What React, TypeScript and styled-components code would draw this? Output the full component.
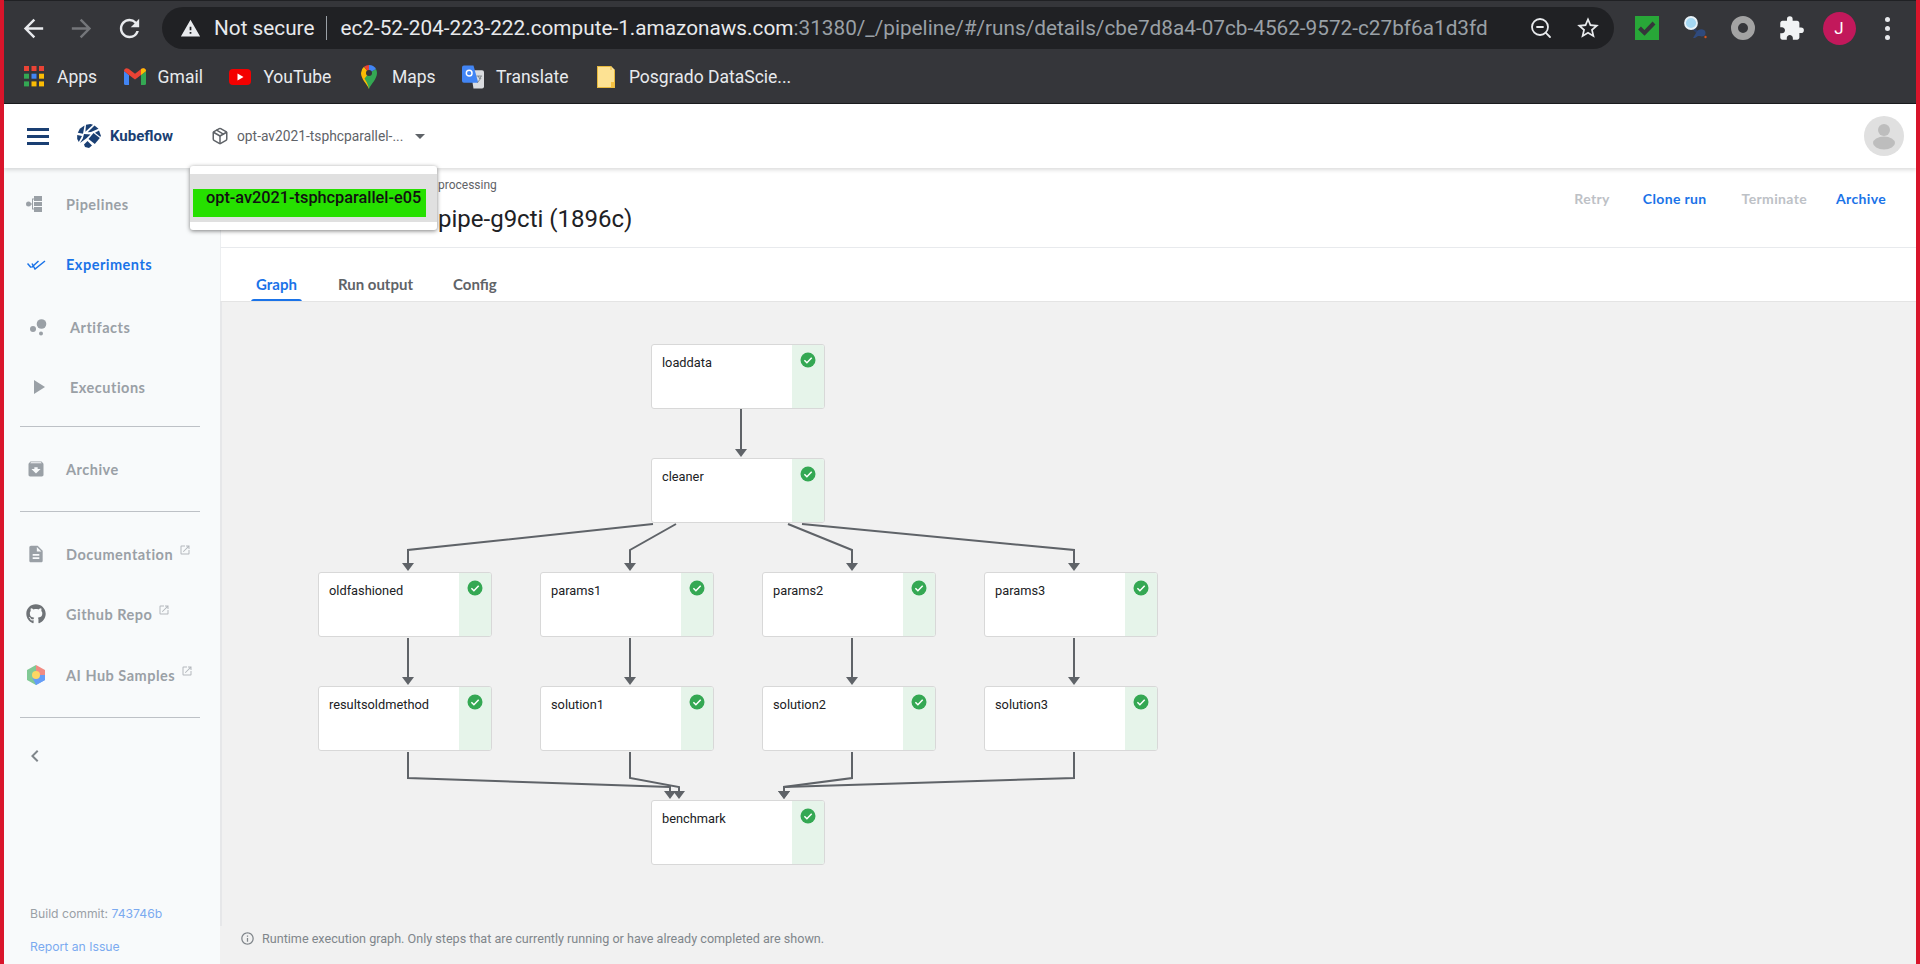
import styled, { createGlobalStyle } from 'styled-components'
import {
  MdArchive,
  MdArrowBack,
  MdArrowForward,
  MdChevronLeft,
  MdDescription,
  MdExtension,
  MdInfoOutline,
  MdOpenInNew,
  MdOutlineStarBorder,
  MdRefresh,
  MdWarning,
} from 'react-icons/md'
import { FaGithub } from 'react-icons/fa'
import { Package, ZoomOut } from 'lucide-react'

const colours = {
  red: '#d9152b',
  chrome: '#35363a',
  omnibox: '#202124',
  blue: '#1a73e8',
  navy: '#1a3f73',
  navGrey: '#9aa0a6',
  line: '#bdc1c6',
  canvas: '#f1f1f1',
  edge: '#5f6368',
  success: '#34a853',
}

const GlobalStyle = createGlobalStyle`
  html, body {
    margin: 0;
    padding: 0;
    height: 100%;
    overflow: hidden;
    background: #fff;
    font-family: Roboto, "Liberation Sans", sans-serif;
  }
`

const Stage = styled.div`
  position: relative;
  height: 964px;
  box-sizing: border-box;
  border-left: 4px solid ${colours.red};
  border-right: 4px solid ${colours.red};
  display: flex;
  flex-direction: column;
  overflow: hidden;
`

const Chrome = styled.div`
  height: 104px;
  flex: none;
  box-sizing: border-box;
  background: ${colours.chrome};
  border-top: 1px solid #202124;
  border-bottom: 1px solid #1b1c1f;
`

const Toolbar = styled.div`
  height: 55px;
  display: flex;
  align-items: flex-start;
  padding: 6px 5px 0;
  box-sizing: border-box;
`

const NavButton = styled.div<{ $dim?: boolean }>`
  width: 48px;
  height: 42px;
  flex: none;
  display: flex;
  align-items: center;
  justify-content: center;
  font-size: 29px;
  color: ${(p) => (p.$dim ? '#74767a' : '#e8eaed')};
`

const Omnibox = styled.div`
  flex: 1;
  height: 42px;
  margin: 0 9px;
  padding: 0 13px 0 18px;
  border-radius: 21px;
  background: ${colours.omnibox};
  display: flex;
  align-items: center;
  color: #e8eaed;
  font-size: 20.75px;
  white-space: nowrap;
`

const OmniIcon = styled.span<{ $size: number; $color?: string; $left?: number }>`
  display: flex;
  flex: none;
  font-size: ${(p) => p.$size}px;
  color: ${(p) => p.$color ?? '#e8eaed'};
  margin-left: ${(p) => p.$left ?? 0}px;
`

const SecurityLabel = styled.span`
  margin-left: 13px;
`

const Divider = styled.span`
  width: 1px;
  height: 24px;
  margin: 0 13px 0 12px;
  background: #9aa0a6;
`

const UrlRest = styled.span`
  color: #9aa0a6;
`

const Url = styled.span`
  flex: 1;
`

const ExtSlot = styled.div`
  width: 48px;
  height: 42px;
  flex: none;
  display: flex;
  align-items: center;
  justify-content: center;
`

const ExtCheck = styled.div`
  width: 24px;
  height: 24px;
  background: #28a738;
  display: flex;
  align-items: center;
  justify-content: center;
`

const ExtRing = styled.div`
  width: 24px;
  height: 24px;
  box-sizing: border-box;
  border: 7px solid #a3a3a3;
  border-radius: 50%;
`

const UserBadge = styled.div`
  width: 33px;
  height: 33px;
  border-radius: 50%;
  background: #c2185b;
  color: #fff;
  font-size: 17px;
  display: flex;
  align-items: center;
  justify-content: center;
`

const Dots = styled.div`
  display: flex;
  flex-direction: column;
  gap: 4px;
`

const Dot = styled.span`
  width: 5px;
  height: 5px;
  border-radius: 50%;
  background: #e8eaed;
`

const BookmarkBar = styled.div`
  height: 47px;
  display: flex;
  align-items: center;
  padding-left: 6px;
  padding-bottom: 6px;
  box-sizing: border-box;
`

const Bookmark = styled.div`
  display: flex;
  align-items: center;
  gap: 12px;
  padding: 0 13.5px 0 13px;
  color: #e8eaed;
  font-size: 17.5px;
  white-space: nowrap;
`

const BookmarkIcon = styled.span`
  width: 22px;
  height: 24px;
  flex: none;
  display: flex;
  align-items: center;
  justify-content: center;
`

const Header = styled.header`
  height: 64px;
  flex: none;
  position: relative;
  z-index: 2;
  background: #fff;
  box-shadow: 0 2px 4px rgba(0, 0, 0, 0.14);
  display: flex;
  align-items: center;
  padding: 0 12px 0 23px;
`

const Burger = styled.div`
  width: 22px;
  display: flex;
  flex-direction: column;
  gap: 4px;
`

const BurgerLine = styled.span`
  height: 3px;
  background: ${colours.navy};
`

const Brand = styled.div`
  display: flex;
  align-items: center;
  gap: 9px;
  margin-left: 28px;
  color: ${colours.navy};
  font-size: 15px;
  font-weight: 700;
  width: 134px;
`

const Namespace = styled.div`
  display: flex;
  align-items: center;
  color: #5f6368;
  font-size: 13.8px;
`

const NamespaceText = styled.span`
  margin-left: 8px;
  width: 178px;
`

const Caret = styled.span`
  width: 0;
  height: 0;
  border-left: 5px solid transparent;
  border-right: 5px solid transparent;
  border-top: 5px solid #5f6368;
`

const Avatar = styled.div`
  margin-left: auto;
  width: 40px;
  height: 40px;
  border-radius: 50%;
  background: #e0e0e0;
`

const Menu = styled.div`
  position: absolute;
  z-index: 3;
  left: 186px;
  top: 166px;
  width: 247px;
  box-sizing: border-box;
  padding: 8px 0;
  background: #fff;
  border-radius: 3px;
  box-shadow: 0 1px 4px rgba(0, 0, 0, 0.5);
`

const MenuOption = styled.div`
  height: 48px;
  box-sizing: border-box;
  padding: 15px 11px 5px 3px;
  background: #e0e0e0;
`

const MenuLabel = styled.div`
  height: 28px;
  box-sizing: border-box;
  padding-left: 13px;
  background: #26e000;
  color: #111;
  font-size: 16.3px;
  font-weight: 500;
  line-height: 18px;
  white-space: nowrap;
`

const Body = styled.div`
  flex: 1;
  display: flex;
  min-height: 0;
`

const Sidebar = styled.nav`
  width: 216px;
  flex: none;
  box-sizing: border-box;
  background: #f8fafb;
  padding: 6px 20px 0 0;
  display: flex;
  flex-direction: column;
  font-family: Lato, Roboto, sans-serif;
`

const NavRow = styled.div<{ $active?: boolean; $pad?: number; $top?: number }>`
  height: 60px;
  flex: none;
  display: flex;
  align-items: center;
  margin-top: ${(p) => p.$top ?? 0}px;
  padding-left: ${(p) => p.$pad ?? 22}px;
  color: ${(p) => (p.$active ? colours.blue : colours.navGrey)};
  font-size: 14.5px;
  font-weight: 700;
  letter-spacing: 0.5px;
  white-space: nowrap;
`

const NavIcon = styled.span`
  width: 20px;
  flex: none;
  display: flex;
  justify-content: center;
  font-size: 20px;
`

const NavLabel = styled.span<{ $indent?: number }>`
  margin-left: ${(p) => p.$indent ?? 20}px;
`

const ExternalMark = styled.span`
  display: flex;
  margin: -8px 0 0 6px;
  font-size: 12px;
  color: #b4b8bd;
`

const SideRule = styled.hr<{ $top: number; $bottom: number }>`
  width: 180px;
  flex: none;
  margin: ${(p) => p.$top}px 0 ${(p) => p.$bottom}px 16px;
  border: 0;
  border-top: 1px solid ${colours.line};
`

const Collapse = styled.div`
  padding-left: 19px;
  font-size: 24px;
  line-height: 0;
  color: #80868b;
  margin-top: 26px;
`

const SideFooter = styled.div`
  margin-top: auto;
  padding: 0 0 10px 26px;
  font-family: Inter, Roboto, sans-serif;
  font-size: 12.2px;
  color: ${colours.navGrey};
  display: flex;
  flex-direction: column;
  gap: 18px;
  white-space: nowrap;
`

const FooterLink = styled.span`
  color: #7baaf0;
`

const Main = styled.main`
  flex: 1;
  min-width: 0;
  display: flex;
  flex-direction: column;
`

const TitleBar = styled.div`
  height: 80px;
  flex: none;
  box-sizing: border-box;
  border-left: 1px solid #eceef0;
  border-bottom: 1px solid #e8eaed;
  padding: 0 30px 0 61px;
  display: flex;
  justify-content: space-between;
`

const Crumbs = styled.div`
  padding-top: 10px;
`

const Crumb = styled.div`
  margin-left: 156px;
  font-size: 12px;
  line-height: 14px;
  color: #5f6368;
`

const TitleRow = styled.div`
  display: flex;
  align-items: center;
  margin-top: 13px;
  height: 28px;
`

const StatusDot = styled.span`
  width: 16px;
  height: 16px;
  margin-top: -2px;
  border-radius: 50%;
  background: ${colours.success};
`

const Title = styled.h1`
  margin: 0 0 0 140px;
  font-size: 24px;
  font-weight: 400;
  color: #202124;
  white-space: nowrap;
`

const Actions = styled.div`
  display: flex;
  padding-top: 23px;
  font-family: Lato, Roboto, sans-serif;
  font-size: 14px;
  font-weight: 700;
  letter-spacing: 0.35px;
  line-height: 16px;
`

const Action = styled.span<{ $on?: boolean; $left: number }>`
  margin-left: ${(p) => p.$left}px;
  color: ${(p) => (p.$on ? colours.blue : '#bdc1c6')};
`

const Tabs = styled.div`
  height: 54px;
  flex: none;
  box-sizing: border-box;
  border-left: 1px solid #eceef0;
  padding-left: 30px;
  display: flex;
`

const Tab = styled.div<{ $on?: boolean; $left: number }>`
  margin-left: ${(p) => p.$left}px;
  position: relative;
  padding: 0 5px;
  line-height: 72px;
  height: 54px;
  font-family: Lato, Roboto, sans-serif;
  font-size: 15px;
  font-weight: 700;
  color: ${(p) => (p.$on ? colours.blue : '#5f6368')};
  ${(p) =>
    p.$on &&
    `&::after {
      content: '';
      position: absolute;
      left: 0;
      right: 0;
      bottom: 0;
      height: 3px;
      border-radius: 3px 3px 0 0;
      background: ${colours.blue};
    }`}
`

const GraphArea = styled.div`
  flex: 1;
  min-height: 0;
  display: flex;
  flex-direction: column;
  background: ${colours.canvas};
`

const Canvas = styled.div`
  position: relative;
  flex: 1;
  border-top: 1px solid #e4e4e4;
  border-left: 2px solid #e6e7e9;
  margin-top: -1px;
`

const Edges = styled.svg`
  position: absolute;
  left: 0;
  top: 0;
`

const Node = styled.div<{ $x: number; $y: number }>`
  position: absolute;
  left: ${(p) => p.$x - 222}px;
  top: ${(p) => p.$y - 302}px;
  width: 174px;
  height: 65px;
  box-sizing: border-box;
  display: flex;
  background: #fff;
  border: 1px solid #d8d8d8;
  border-radius: 3px;
  overflow: hidden;
`

const NodeName = styled.div`
  flex: 1;
  padding: 10px 10px;
  font-size: 12.8px;
  line-height: 15px;
  color: #202124;
`

const NodeStatus = styled.div`
  width: 32px;
  flex: none;
  background: #e6f4ea;
  padding: 7px 0 0 8px;
  box-sizing: border-box;
`

const Note = styled.div`
  height: 38px;
  flex: none;
  box-sizing: border-box;
  padding: 0 0 14px 20px;
  display: flex;
  align-items: center;
  gap: 7px;
  font-size: 12.6px;
  color: #80868b;
  white-space: nowrap;
`

const NoteIcon = styled.span`
  display: flex;
  font-size: 15px;
`

const nodes = [
  { name: 'loaddata', x: 651, y: 344 },
  { name: 'cleaner', x: 651, y: 458 },
  { name: 'oldfashioned', x: 318, y: 572 },
  { name: 'params1', x: 540, y: 572 },
  { name: 'params2', x: 762, y: 572 },
  { name: 'params3', x: 984, y: 572 },
  { name: 'resultsoldmethod', x: 318, y: 686 },
  { name: 'solution1', x: 540, y: 686 },
  { name: 'solution2', x: 762, y: 686 },
  { name: 'solution3', x: 984, y: 686 },
  { name: 'benchmark', x: 651, y: 800 },
]

// [polyline points, arrow tip x, arrow tip y] in page coordinates
const edges: [string, number, number][] = [
  ['741,409 741,450', 741, 457],
  ['653,524 408,550 408,564', 408, 571],
  ['676,524 630,550 630,564', 630, 571],
  ['788,524 852,550 852,564', 852, 571],
  ['802,524 1074,550 1074,564', 1074, 571],
  ['408,638 408,677', 408, 685],
  ['630,638 630,677', 630, 685],
  ['852,638 852,677', 852, 685],
  ['1074,638 1074,677', 1074, 685],
  ['408,752 408,778 670,787 670,792', 670, 799],
  ['630,752 630,778 679,787 679,792', 679, 799],
  ['852,752 852,778 784,787 784,792', 784, 799],
  ['1074,752 1074,778 784,787 784,792', 784, 799],
]

const CheckBadge = () => (
  <svg width="16" height="16" viewBox="0 0 16 16">
    <circle cx="8" cy="8" r="7.5" fill={colours.success} />
    <path d="M4.4 8.2l2.5 2.5 4.8-5" fill="none" stroke="#fff" strokeWidth="1.5" />
  </svg>
)

const AppsIcon = () => {
  const dots = ['#ea4335', '#ea4335', '#ea4335', '#34a853', '#4285f4', '#fbbc04', '#34a853', '#fbbc04', '#fbbc04']
  return (
    <svg width="20" height="21" viewBox="0 0 20 21">
      {dots.map((fill, i) => (
        <rect key={i} x={(i % 3) * 7.5} y={Math.floor(i / 3) * 7.7} width="5" height="5" fill={fill} />
      ))}
    </svg>
  )
}

const GmailIcon = () => (
  <svg width="22" height="17" viewBox="0 0 22 17">
    <path d="M0 3v12.5A1.5 1.5 0 0 0 1.5 17H5V7z" fill="#4285f4" />
    <path d="M17 7v10h3.5a1.5 1.5 0 0 0 1.5-1.5V3z" fill="#34a853" />
    <path d="M0 3l5 4 6 4.5L17 7l5-4c0-2.6-2.6-3.6-4.5-2.2L11 5.8 4.500.8C2.600-.6 0 .4 0 3z" fill="#ea4335" />
    <path d="M17 7V1.200l.500-.4C19.400-.6 22 .4 22 3z" fill="#fbbc04" />
  </svg>
)

const YouTubeIcon = () => (
  <svg width="22" height="16" viewBox="0 0 22 16">
    <rect width="22" height="16" rx="4" fill="#f40000" />
    <path d="M8.500 4.500v7l6-3.500z" fill="#fff" />
  </svg>
)

const MapsIcon = () => (
  <svg width="16" height="24" viewBox="0 0 16 24">
    <path d="M8 24C6 19 0 14 0 8a8 8 0 0 1 3-6.200L8 8z" fill="#fbbc04" />
    <path d="M8 24c2-5 8-10 8-16 0-1.500-.4-2.800-1-4L8 8 3.500 13.500C5 16 7 19 8 24z" fill="#34a853" />
    <path d="M3 1.800A8 8 0 0 1 8 0v8z" fill="#ea4335" />
    <path d="M8 0a8 8 0 0 1 7 4L8 8z" fill="#4285f4" />
    <circle cx="8" cy="8" r="3" fill="#35363a" />
  </svg>
)

const TranslateIcon = () => (
  <svg width="23" height="24" viewBox="0 0 23 24">
    <path d="M9 5h12a2 2 0 0 1 2 2v15a2 2 0 0 1-2 2H12z" fill="#dadce0" />
    <path d="M2 0h10l5 18H2a2 2 0 0 1-2-2V2a2 2 0 0 1 2-2z" fill="#4285f4" />
    <path d="M17 11l1.500 3 1.500-3M15 11h6M16 18l4-5" fill="none" stroke="#80868b" strokeWidth="1" />
    <circle cx="7.500" cy="8" r="3" fill="none" stroke="#fff" strokeWidth="1.500" />
  </svg>
)

const FolderNote = () => (
  <svg width="18" height="22" viewBox="0 0 18 22">
    <path d="M1 0h13l4 4v17a1 1 0 0 1-1 1H1a1 1 0 0 1-1-1V1a1 1 0 0 1 1-1z" fill="#fde293" />
    <path d="M.5.500h13.500V4M17.500 4v17.500H.5V.500" fill="none" stroke="#e8b93c" />
    <rect x="14" y="16" width="3.500" height="5.500" fill="#f6c244" />
  </svg>
)

const InspectorIcon = () => (
  <svg width="24" height="24" viewBox="0 0 24 24">
    <path d="M10 12l4 4" stroke="#2d3f66" strokeWidth="2.500" />
    <path d="M10 22l3-5c1-3 5-5 8-3 2 1 2 5 0 6-2 1-5 0-6 0l-3 2z" fill="#2f4a7d" />
    <circle cx="22.500" cy="21" r="1.200" fill="#d3541f" />
    <circle cx="8" cy="7" r="6" fill="#a5d8f3" stroke="#e8f2f8" strokeWidth="1.800" />
  </svg>
)

const KubeflowLogo = () => (
  <svg width="24" height="24" viewBox="0 0 24 24" fill={colours.navy}>
    <path d="M9 .8l4.500-.8 2.500.800L8.400 7.800z" />
    <path d="M17.500 1.500l4 3.200-7.500 3.300-3.300.300z" />
    <path d="M7.500 1.500L2.800 4.800.8 8.800l5.200 1z" />
    <path d="M.2 11l4.800 1-3.200 6L.2 15z" />
    <path d="M7 10L5.800 14.500 3 19l5.500-4 1-.8 4-3.700z" />
    <path d="M16.500 9l6.300 5-5 6-6.300-5z" />
    <path d="M7 20.500l3.500-3.500 4.500 4.500-3 2.500-4-1z" />
    <path d="M22 6.500l1.800 5-.3 1.500-5.500-4.300z" />
  </svg>
)

const PipelinesIcon = () => (
  <svg width="16" height="16" viewBox="0 0 16 16" fill={colours.navGrey}>
    <circle cx="2.500" cy="8" r="2.500" />
    <rect x="8" y="0" width="8" height="5" />
    <rect x="8" y="6" width="8" height="4" />
    <rect x="8" y="11" width="8" height="5" />
    <path d="M3 7.500h3V2.500h3v1H7v9h2v1H6v-5H3z" />
  </svg>
)

const ExperimentsIcon = () => (
  <svg width="19" height="12" viewBox="0 0 19 12" fill="none" stroke={colours.blue} strokeWidth="1.500">
    <path d="M0.500 5.500l3.500 4M4.500 9.500l7-6.500M5 5.500l3 5.500 10-8" />
  </svg>
)

const ArtifactsIcon = () => (
  <svg width="17" height="17" viewBox="0 0 17 17" fill={colours.navGrey}>
    <circle cx="3" cy="10" r="3" />
    <circle cx="11.500" cy="5" r="4.800" />
    <circle cx="11" cy="14.500" r="2" />
  </svg>
)

const ExecutionsIcon = () => (
  <svg width="11" height="14" viewBox="0 0 11 14" fill={colours.navGrey}>
    <path d="M0 0l11 7-11 7z" />
  </svg>
)

const HubIcon = () => (
  <svg width="18" height="20" viewBox="0 0 18 20">
    <path d="M9 0l9 5v5H9z" fill="#f28b82" />
    <path d="M0 5l9-5v10H0z" fill="#81c995" />
    <path d="M0 5v10l9 5v-10z" fill="#81c995" />
    <path d="M18 10v5l-9 5V10z" fill="#669df6" />
    <path d="M9 20l9-5-5-3-4 2-4-2z" fill="#669df6" />
    <circle cx="9" cy="10" r="4" fill="#fdd663" />
  </svg>
)

const AvatarFigure = () => (
  <svg width="40" height="40" viewBox="0 0 40 40" fill="#bdbdbd">
    <circle cx="20" cy="14" r="6" />
    <ellipse cx="20" cy="27" rx="11" ry="6.500" />
  </svg>
)

const App = () => {
  return (
    <>
      <GlobalStyle />
      <Stage>
        <Chrome>
          <Toolbar>
            <NavButton><MdArrowBack /></NavButton>
            <NavButton $dim><MdArrowForward /></NavButton>
            <NavButton><MdRefresh /></NavButton>
            <Omnibox>
              <OmniIcon $size={21}><MdWarning /></OmniIcon>
              <SecurityLabel>Not secure</SecurityLabel>
              <Divider />
              <Url>
                ec2-52-204-223-222.compute-1.amazonaws.com
                <UrlRest>:31380/_/pipeline/#/runs/details/cbe7d8a4-07cb-4562-9572-c27bf6a1d3fd</UrlRest>
              </Url>
              <OmniIcon $size={24}><ZoomOut size={24} strokeWidth={1.8} /></OmniIcon>
              <OmniIcon $size={26} $left={22}><MdOutlineStarBorder /></OmniIcon>
            </Omnibox>
            <ExtSlot>
              <ExtCheck>
                <svg width="18" height="15" viewBox="0 0 18 15" fill="none" stroke="#35363a" strokeWidth="4">
                  <path d="M1.500 7l5 5 9.500-10" />
                </svg>
              </ExtCheck>
            </ExtSlot>
            <ExtSlot><InspectorIcon /></ExtSlot>
            <ExtSlot><ExtRing /></ExtSlot>
            <ExtSlot><OmniIcon $size={27} $color="#f1f3f4"><MdExtension /></OmniIcon></ExtSlot>
            <ExtSlot><UserBadge>J</UserBadge></ExtSlot>
            <ExtSlot>
              <Dots><Dot /><Dot /><Dot /></Dots>
            </ExtSlot>
          </Toolbar>
          <BookmarkBar>
            <Bookmark><BookmarkIcon><AppsIcon /></BookmarkIcon>Apps</Bookmark>
            <Bookmark><BookmarkIcon><GmailIcon /></BookmarkIcon>Gmail</Bookmark>
            <Bookmark><BookmarkIcon><YouTubeIcon /></BookmarkIcon>YouTube</Bookmark>
            <Bookmark><BookmarkIcon><MapsIcon /></BookmarkIcon>Maps</Bookmark>
            <Bookmark><BookmarkIcon><TranslateIcon /></BookmarkIcon>Translate</Bookmark>
            <Bookmark><BookmarkIcon><FolderNote /></BookmarkIcon>Posgrado DataScie...</Bookmark>
          </BookmarkBar>
        </Chrome>

        <Header>
          <Burger><BurgerLine /><BurgerLine /><BurgerLine /></Burger>
          <Brand><KubeflowLogo />Kubeflow</Brand>
          <Namespace>
            <Package size={18} strokeWidth={2} />
            <NamespaceText>opt-av2021-tsphcparallel-...</NamespaceText>
            <Caret />
          </Namespace>
          <Avatar><AvatarFigure /></Avatar>
        </Header>

        <Menu>
          <MenuOption>
            <MenuLabel>opt-av2021-tsphcparallel-e05</MenuLabel>
          </MenuOption>
        </Menu>

        <Body>
          <Sidebar>
            <NavRow $pad={20}><NavIcon><PipelinesIcon /></NavIcon><NavLabel $indent={22}>Pipelines</NavLabel></NavRow>
            <NavRow $active><NavIcon><ExperimentsIcon /></NavIcon><NavLabel>Experiments</NavLabel></NavRow>
            <NavRow $pad={24} $top={3}><NavIcon><ArtifactsIcon /></NavIcon><NavLabel $indent={22}>Artifacts</NavLabel></NavRow>
            <NavRow $pad={25}><NavIcon><ExecutionsIcon /></NavIcon><NavLabel $indent={21}>Executions</NavLabel></NavRow>
            <SideRule $top={9} $bottom={12} />
            <NavRow><NavIcon><MdArchive /></NavIcon><NavLabel>Archive</NavLabel></NavRow>
            <SideRule $top={12} $bottom={12} />
            <NavRow>
              <NavIcon><MdDescription /></NavIcon>
              <NavLabel>Documentation</NavLabel>
              <ExternalMark><MdOpenInNew /></ExternalMark>
            </NavRow>
            <NavRow>
              <NavIcon><FaGithub color="#6f7377" /></NavIcon>
              <NavLabel>Github Repo</NavLabel>
              <ExternalMark><MdOpenInNew /></ExternalMark>
            </NavRow>
            <NavRow $top={1}>
              <NavIcon><HubIcon /></NavIcon>
              <NavLabel>AI Hub Samples</NavLabel>
              <ExternalMark><MdOpenInNew /></ExternalMark>
            </NavRow>
            <SideRule $top={12} $bottom={0} />
            <Collapse><MdChevronLeft /></Collapse>
            <SideFooter>
              <span>Build commit: <FooterLink>743746b</FooterLink></span>
              <FooterLink>Report an Issue</FooterLink>
            </SideFooter>
          </Sidebar>

          <Main>
            <TitleBar>
              <Crumbs>
                <Crumb>processing</Crumb>
                <TitleRow>
                  <StatusDot />
                  <Title>pipe-g9cti (1896c)</Title>
                </TitleRow>
              </Crumbs>
              <Actions>
                <Action $left={0}>Retry</Action>
                <Action $left={33} $on>Clone run</Action>
                <Action $left={35}>Terminate</Action>
                <Action $left={29} $on>Archive</Action>
              </Actions>
            </TitleBar>
            <Tabs>
              <Tab $left={0} $on>Graph</Tab>
              <Tab $left={31}>Run output</Tab>
              <Tab $left={30}>Config</Tab>
            </Tabs>
            <GraphArea>
              <Canvas>
                <Edges width="1694" height="624" viewBox="222 302 1694 624">
                  {edges.map(([points, tipX, tipY]) => (
                    <g key={points}>
                      <polyline points={points} fill="none" stroke={colours.edge} strokeWidth="2" />
                      <path d={`M${tipX - 6} ${tipY - 8}h12l-6 8z`} fill={colours.edge} />
                    </g>
                  ))}
                </Edges>
                {nodes.map((node) => (
                  <Node key={node.name} $x={node.x} $y={node.y}>
                    <NodeName>{node.name}</NodeName>
                    <NodeStatus><CheckBadge /></NodeStatus>
                  </Node>
                ))}
              </Canvas>
              <Note>
                <NoteIcon><MdInfoOutline /></NoteIcon>
                Runtime execution graph. Only steps that are currently running or have already completed are shown.
              </Note>
            </GraphArea>
          </Main>
        </Body>
      </Stage>
    </>
  )
}

export default App
